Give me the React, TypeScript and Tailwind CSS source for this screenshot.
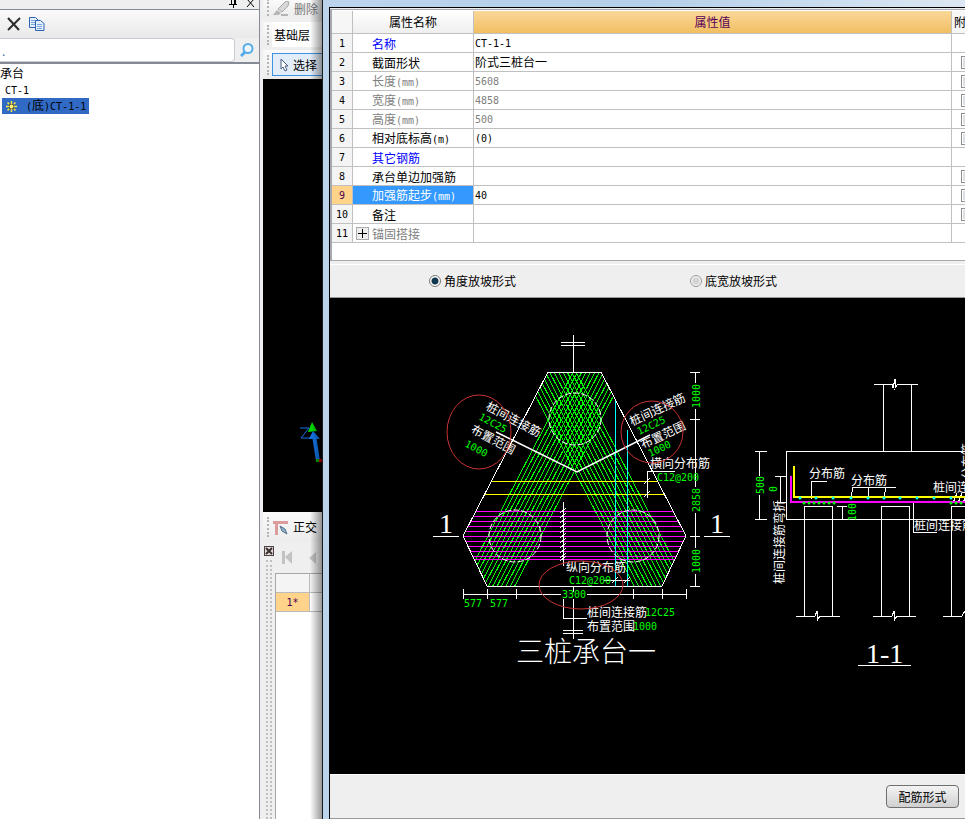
import type { ReactNode } from "react";

type Row = { name: string; value: string; tone?: "link" | "muted"; check?: boolean; selected?: boolean; expand?: boolean };

const rows: Row[] = [
  { name: "名称", value: "CT-1-1", tone: "link" },
  { name: "截面形状", value: "阶式三桩台一", check: true },
  { name: "长度(mm)", value: "5608", tone: "muted", check: true },
  { name: "宽度(mm)", value: "4858", tone: "muted", check: true },
  { name: "高度(mm)", value: "500", tone: "muted", check: true },
  { name: "相对底标高(m)", value: "(0)", check: true },
  { name: "其它钢筋", value: "", tone: "link" },
  { name: "承台单边加强筋", value: "", check: true },
  { name: "加强筋起步(mm)", value: "40", check: true, selected: true },
  { name: "备注", value: "", check: true },
  { name: "锚固搭接", value: "", tone: "muted", expand: true },
];

const HEX = "548,372 601,372 686,536 662,586 487,586 463,536";
const bars = Array.from({ length: 13 }, (_, i) => i);
const meshRows = [511, 516, 521, 526, 531, 536, 541, 546, 551, 556, 559];

// Latin runs are set in a narrower mono face than the Chinese around them
function Mixed({ text }: { text: string }) {
  const parts = text.match(/[\x20-\x7e]+|[^\x20-\x7e]+/g) || [];
  return (
    <>
      {parts.map((p, i) =>
        /^[\x20-\x7e]/.test(p) ? (
          <span key={i} className="font-['DejaVu_Sans_Mono',monospace] text-[10px]">{p}</span>
        ) : (
          <span key={i}>{p}</span>
        )
      )}
    </>
  );
}

function Grip() {
  return <span className="h-5 w-0 shrink-0 border-l-2 border-dotted border-[#b4b4b4]" />;
}

function ToolRow({ children }: { children: ReactNode }) {
  return (
    <div className="flex shrink-0 items-center gap-[3px] overflow-hidden bg-gradient-to-b from-[#fafafa] to-[#ececec] pl-1 text-[12px] whitespace-nowrap">
      {children}
    </div>
  );
}

function TreePanel() {
  return (
    <aside className="flex w-[260px] shrink-0 flex-col border-r border-[#858b95] bg-white">
      <div className="flex h-[10px] items-start justify-end gap-2 overflow-hidden border-b border-[#858b95] bg-[#efefef] pr-1">
        <svg width="10" height="8" viewBox="0 0 10 8" stroke="#000" fill="none" shapeRendering="crispEdges">
          <path d="M3 0v4M6 0v4M7 0v4M1 4h8M5 4v4" />
        </svg>
        <svg width="9" height="8" viewBox="0 0 9 8" stroke="#000" fill="none">
          <path d="M1 -1l7 8M8 -1l-7 8" />
        </svg>
      </div>
      <div className="flex h-[28px] items-center gap-2 bg-gradient-to-b from-[#fafafa] to-[#e9e9e9] pb-px pl-[7px]">
        <button type="button" aria-label="删除构件">
          <svg width="14" height="14" viewBox="0 0 14 14" stroke="#2c2c2c" fill="none">
            <path d="M1 1l11 12" strokeWidth="2" />
            <path d="M13 1L1 13" strokeWidth="2" />
          </svg>
        </button>
        <button type="button" aria-label="复制构件">
          <svg width="16" height="14" viewBox="0 0 16 14" stroke="#2d63b4" fill="#e4effc">
            <path d="M.5 .5h6l3 3v7h-9z" />
            <path d="M2 3.500h4M2 5.500h4M2 7.500h4" stroke="#7fa6dc" />
            <path d="M6.500 3.500h5l3.500 3v7h-8.500z" />
            <path d="M8 7.500h5M8 9.500h5M8 11.500h5" stroke="#7fa6dc" />
          </svg>
        </button>
      </div>
      <div className="flex h-[26px] items-center border-b-2 border-[#858b95] bg-[#efefef]">
        <input
          type="text"
          aria-label="搜索构件"
          placeholder="."
          className="h-6 min-w-0 flex-1 rounded-r-sm border border-l-0 border-[#c8ccd4] bg-white pl-[2px] text-[12px] placeholder:text-[#4a7ab0]"
        />
        <button type="button" aria-label="搜索" className="flex w-[24px] justify-center">
          <svg width="14" height="14" viewBox="0 0 14 14" fill="#eef7fd" stroke="#55ace9">
            <path d="M5 9L1 13" strokeWidth="3" />
            <circle cx="8" cy="5.500" r="4.500" strokeWidth="2" />
          </svg>
        </button>
      </div>
      <ul className="text-[12px] leading-4">
        <li>
          <button type="button" className="block h-4 pt-px">承台</button>
        </li>
        <li>
          <button type="button" className="block h-4 pt-px pl-[5px]"><Mixed text="CT-1" /></button>
        </li>
        <li>
          <button type="button" className="mt-[2px] ml-[2px] flex h-4 items-center gap-[9px] bg-[#316ac5] pr-[3px] pl-1">
            <svg width="11" height="11" viewBox="0 0 11 11" fill="none">
              <path d="M5.500 0v11M0 5.500h11M1.500 1.500l8 8M9.500 1.500l-8 8" stroke="#f7e948" strokeWidth="1.500" />
              <path d="M4 2.500v6M7 2.500v6M2.500 4h6M2.500 7h6" stroke="#1b1b1b" strokeWidth=".7" />
              <rect x="4" y="4" width="3" height="3" fill="#fff27a" />
            </svg>
            <span><Mixed text="(底)CT-1-1" /></span>
          </button>
        </li>
      </ul>
    </aside>
  );
}

function ToolColumn() {
  return (
    <section className="relative flex w-[59px] shrink-0 flex-col overflow-hidden bg-[#efefef]">
      <ToolRow>
        <div className="flex h-[17px] items-center gap-1">
          <Grip />
          <button type="button" disabled className="flex h-[15px] items-center gap-1 text-[#777]">
            <svg width="17" height="15" viewBox="0 0 17 15">
              <path d="M0 14l4-5 4 3c-1 2-4 2-8 2z" fill="#b4b4b4" />
              <path d="M5 8L13 0l3 1-1 4-6 6z" fill="#d8d8d8" stroke="#a8a8a8" />
              <path d="M8 14h7" stroke="#b4b4b4" strokeWidth="2" />
            </svg>
            删除
          </button>
        </div>
      </ToolRow>
      <div className="h-[5px]" />
      <ToolRow>
        <Grip />
        <select aria-label="楼层" className="h-[25px] w-[60px] shrink-0 appearance-none bg-white px-[2px]">
          <option>基础层</option>
        </select>
      </ToolRow>
      <div className="h-[3px]" />
      <ToolRow>
        <Grip />
        <button type="button" className="my-[3px] flex h-[23px] w-[52px] shrink-0 items-center gap-[3px] border border-[#3c93e6] bg-[#e3edf9] pl-[6px]">
          <svg width="11" height="14" viewBox="0 0 11 14" fill="#fff" stroke="#4a5d85">
            <path d="M2 1v10l2-2 2 4 2-1-2-4h3z" />
          </svg>
          选择
        </button>
      </ToolRow>
      <div className="flex h-[433px] items-end justify-end bg-black pb-12">
        <svg width="22" height="44" viewBox="300 421 22 44" fill="none">
          <path d="M300 429h9l-8 10h9" stroke="#1672e6" />
          <path d="M308 433l4-10 5 9z" fill="#00e000" />
          <path d="M318 462l-4-26" stroke="#1478f0" strokeWidth="4" />
          <path d="M309 440l4-8 7 8z" fill="#1478f0" />
          <path d="M316 460h4v3h-4z" fill="#00b400" />
          <path d="M319 460h3v3h-3z" fill="#d00000" />
        </svg>
      </div>
      <ToolRow>
        <Grip />
        <button type="button" className="flex h-[30px] items-center gap-1 pl-px">
          <svg width="16" height="16" viewBox="0 0 16 16">
            <path d="M0 2h15v3H5v11H2V5H0z" fill="#dc9c9c" />
            <path d="M7 7l5 3 2 5-5-3z" fill="#8fb2cf" stroke="#55708a" />
          </svg>
          正交
        </button>
      </ToolRow>
      <div className="flex flex-1">
        <div className="flex w-3 flex-col items-center gap-1 pt-1">
          <button type="button" aria-label="关闭" className="h-[10px] w-[10px] border border-[#444] bg-[#eed6d6]">
            <svg width="8" height="8" viewBox="0 0 8 8" stroke="#333">
              <path d="M1 1l6 6M7 1l-6 6" strokeWidth="2" />
            </svg>
          </button>
          <div className="flex flex-1 gap-[2px]">
            <span className="border-l-2 border-dotted border-[#c0c0c0]" />
            <span className="border-l-2 border-dotted border-[#c0c0c0]" />
          </div>
        </div>
        <div className="flex flex-1 flex-col">
          <div className="flex h-[31px] items-center gap-4 pl-[7px]">
            <button type="button" aria-label="首条" disabled>
              <svg width="11" height="13" viewBox="0 0 11 13" fill="#c2c2c2"><path d="M0 0h3v13H0zM10 0v13L3 6z" /></svg>
            </button>
            <button type="button" aria-label="上一条" disabled>
              <svg width="7" height="12" viewBox="0 0 7 12" fill="#c2c2c2"><path d="M7 0v12L0 6z" /></svg>
            </button>
          </div>
          <div className="flex-1 border-t border-l border-[#a6a8ae] bg-white">
            <table className="w-full table-fixed border-separate border-spacing-0 text-[12px]">
              <thead>
                <tr>
                  <th className="h-[19px] w-[34px] border-r border-b border-[#bbb] bg-[#f4f4f4]" />
                  <th className="border-b border-[#bbb] bg-[#f4f4f4]" />
                </tr>
              </thead>
              <tbody>
                <tr>
                  <td className="h-[19px] border-r border-b border-[#bbb] bg-[#ffd38a] p-0 text-center leading-4 text-[#4b0055]"><Mixed text="1*" /></td>
                  <td className="border-b border-[#bbb]" />
                </tr>
              </tbody>
            </table>
          </div>
        </div>
      </div>
      {/* shadow cast by the dialog */}
      <div className="pointer-events-none absolute inset-y-0 right-0 w-3 bg-gradient-to-r from-transparent to-black/40" />
    </section>
  );
}

function PropertyTable() {
  return (
    <div className="border-t border-b border-l-2 border-[#a8a8b0] bg-white pt-px pb-[17px]">
      <table className="w-full table-fixed border-separate border-spacing-0 text-[12px] leading-4">
        <thead>
          <tr className="h-[23px]">
            <th className="h-[23px] w-[21px] border-r border-b border-[#c0c0c0] bg-[#f6f6f6]" />
            <th className="w-[121px] border-r border-b border-[#c0c0c0] bg-gradient-to-b from-white to-[#efefef] p-0 font-normal">属性名称</th>
            <th className="border-r border-b border-[#c0c0c0] bg-gradient-to-b from-[#fad798] to-[#f1bf62] p-0 font-normal text-[#5a0058]">属性值</th>
            <th className="w-[13px] overflow-hidden border-b border-[#c0c0c0] bg-[#f6f6f6] p-0 pl-[2px] text-left font-normal whitespace-nowrap">附加</th>
          </tr>
        </thead>
        <tbody>
          {rows.map((r, i) => (
            <tr key={r.name}>
              <td className={`h-[19px] border-r border-b border-[#c0c0c0] p-0 text-center ${r.selected ? "bg-[#ffd38a] text-[#4b0055]" : "bg-[#f4f4f4]"}`}>
                <Mixed text={String(i + 1)} />
              </td>
              <td className={`border-r border-b border-[#c0c0c0] p-0 ${r.selected ? "bg-[#3399ff] text-white" : r.tone === "link" ? "text-[#0000ff]" : r.tone === "muted" ? "text-[#808080]" : ""}`}>
                <div className="flex h-[18px] items-center pt-px">
                  <span className="flex w-[19px] shrink-0 justify-center">
                    {r.expand && (
                      <button type="button" aria-label="展开" className="h-[13px] w-[13px] border border-[#aaa] bg-[#eee]">
                        <svg width="11" height="11" viewBox="0 0 11 11" stroke="#000" shapeRendering="crispEdges"><path d="M1 5.500h9M5.500 1v9" /></svg>
                      </button>
                    )}
                  </span>
                  <span><Mixed text={r.name} /></span>
                </div>
              </td>
              <td className={`border-r border-b border-[#c0c0c0] p-0 pl-px ${r.tone === "muted" ? "text-[#808080]" : ""}`}><Mixed text={r.value} /></td>
              <td className="overflow-hidden border-b border-[#c0c0c0] p-0">
                {r.check && (
                  <input type="checkbox" aria-label={`附加 ${r.name}`} className="ml-[9px] block h-[13px] w-[13px] appearance-none border border-[#8e8f8f] bg-[#dcdfe3] outline outline-1 -outline-offset-2 outline-white" />
                )}
              </td>
            </tr>
          ))}
        </tbody>
      </table>
    </div>
  );
}

function Cjk({ x, y, children, rotate = 0, fill = "#fff" }: { x: number; y: number; children: ReactNode; rotate?: number; fill?: string }) {
  return (
    <text x={x} y={y} fill={fill} transform={`rotate(${rotate} ${x} ${y})`} className="font-['Noto_Sans_CJK_SC',sans-serif] text-[12px]">
      {children}
    </text>
  );
}

function Num({ x, y, children, rotate = 0 }: { x: number; y: number; children: ReactNode; rotate?: number }) {
  return (
    <text x={x} y={y} fill="#00ff00" transform={`rotate(${rotate} ${x} ${y})`} className="font-['DejaVu_Sans_Mono',monospace] text-[10px]">
      {children}
    </text>
  );
}

function PlanView() {
  return (
    <g fill="none" stroke="#fff">
      <clipPath id="cap"><polygon points={HEX} /></clipPath>
      <g clipPath="url(#cap)">
        <g stroke="#00ff00" shapeRendering="crispEdges">
          {bars.map((i) => (
            <path key={i} d={`M${573 + i * 4.4} 372l-111 214M${576 - i * 4.4} 372l111 214`} />
          ))}
        </g>
        <path d="M463 481.500h223M463 494.500h223" stroke="#ffff00" />
        <path d={meshRows.map((y) => `M463 ${y + 0.5}h223`).join("")} stroke="#ff00ff" />
        <path d="M615.500 400v186M627.500 430v156" stroke="#00ffff" />
      </g>
      <g shapeRendering="crispEdges">
        <polygon points={HEX} />
        <path d="M573 335v37M561 342h24M561 345h24" />
        <path d="M563 502v64M563 599v19h24M573 587v5M573 599v40M563 630h20M563 633h20" />
        {meshRows.map((y) => (
          <path key={y} d={`M560 ${y + 2}l6 -5`} />
        ))}
        <path d="M463 594h98M587 594h99M463 589v10M487 589v10M516 589v10M633 589v10M662 589v10M686 589v10" />
        <path d="M695 372v11M695 409v78M695 513v35M695 574v12M690 372h10M690 419h10M690 536h10M690 586h10" />
        <path d="M675 471h-28v27M644 484l6 -6M644 497l6 -6M604 580h26M612 583l6 -6M624 583l6 -6" />
        <path d="M433 536h26M704 536h26" />
      </g>
      <path d="M496 432L577 472L650 435" strokeWidth="1.500" />
      <g strokeDasharray="6 2">
        <circle cx="575" cy="419" r="26" />
        <circle cx="515" cy="536" r="26" />
        <circle cx="633" cy="536" r="26" />
      </g>
      <g stroke="none">
        <Cjk x={485} y={409} rotate={28}>桩间连接筋</Cjk>
        <Num x={478} y={419} rotate={28}>12C25</Num>
        <Cjk x={470} y={432} rotate={28}>布置范围</Cjk>
        <Num x={464} y={446} rotate={28}>1000</Num>
        <Cjk x={632} y={426} rotate={-25}>桩间连接筋</Cjk>
        <Num x={639} y={435} rotate={-25}>12C25</Num>
        <Cjk x={643} y={449} rotate={-25}>布置范围</Cjk>
        <Num x={650} y={457} rotate={-25}>1000</Num>
        <Cjk x={650} y={468}>横向分布筋</Cjk>
        <Num x={657} y={481}>C12@200</Num>
        <Cjk x={566} y={572}>纵向分布筋</Cjk>
        <Num x={569} y={584}>C12@200</Num>
        <Num x={562} y={598}>3300</Num>
        <Num x={464} y={607}>577</Num>
        <Num x={490} y={607}>577</Num>
        <Cjk x={587} y={617}>桩间连接筋</Cjk>
        <Num x={645} y={616}>12C25</Num>
        <Cjk x={587} y={631}>布置范围</Cjk>
        <Num x={633} y={630}>1000</Num>
        <Num x={700} y={408} rotate={-90}>1000</Num>
        <Num x={700} y={512} rotate={-90}>2858</Num>
        <Num x={700} y={573} rotate={-90}>1000</Num>
        <g fill="#fff" className="text-[28px]">
          <text x="439" y="533" className="font-['Liberation_Serif',serif]">1</text>
          <text x="710" y="533" className="font-['Liberation_Serif',serif]">1</text>
          <text x="516" y="662" className="font-['Noto_Sans_CJK_SC',sans-serif] font-light">三桩承台一</text>
        </g>
      </g>
      <g stroke="#c83232">
        <ellipse cx="479" cy="432" rx="32" ry="37" />
        <circle cx="652" cy="432" r="31" />
        <ellipse cx="581" cy="585" rx="42" ry="24" />
      </g>
    </g>
  );
}

function SectionView() {
  return (
    <g fill="none" stroke="#fff">
      <g shapeRendering="crispEdges">
        <path d="M970 451H786V519H970" />
        <path d="M883 451V384M911 451V384M874 384h18l1 4l2 -9v9l3 -4h20" />
        <path d="M759 451v25M759 495v24M755 451h12M755 519h12M780 476v26M775 476h11M775 502h11" />
        <path d="M804 616V506h28v110M881 616V506h28v110M951 616V506h19" />
        <path d="M796 616h19l2 -5v10l3 -5h20M873 616h19l2 -5v10l3 -5h19M943 616h19l3 -5" />
        <path d="M842 506v14M837 506h10M913 501v31h24" />
        <path d="M827 481h-16v18M896 487h-43l-2 11M869 487l-1 11M886 487l-2 11M957 493l-4 10M962 493l-4 10M967 493l-4 10" />
        <path d="M858 665h53" />
        <path d="M794 466v31h176" stroke="#ffff00" strokeWidth="2" />
        <path d="M791 476v26h180" stroke="#ff00ff" strokeWidth="2" />
      </g>
      <g stroke="none">
        {[800, 816, 833, 851, 868, 884, 900, 917, 934, 951].map((x) => (
          <circle key={x} cx={x} cy="498" r="1.500" fill="#00ffff" />
        ))}
        {[804, 809, 814, 819, 824, 829, 834, 951, 956, 961].map((x) => (
          <circle key={x} cx={x} cy="503" r="1.500" fill="#00ff00" />
        ))}
        <Cjk x={809} y={478}>分布筋</Cjk>
        <Cjk x={851} y={485}>分布筋</Cjk>
        <Cjk x={933} y={492}>桩间连接筋</Cjk>
        <Cjk x={914} y={530}>桩间连接筋</Cjk>
        <Cjk x={784} y={584} rotate={-90}>桩间连接筋弯折</Cjk>
        <Cjk x={972} y={479} rotate={-90}>分布筋</Cjk>
        <Num x={764} y={494} rotate={-90}>500</Num>
        <Num x={777} y={492} rotate={-90}>0</Num>
        <Num x={856} y={521} rotate={-90}>100</Num>
        <text x="866" y="663" fill="#fff" className="font-['Liberation_Serif',serif] text-[28px]">1-1</text>
      </g>
    </g>
  );
}

function PropertyDialog() {
  return (
    <main className="flex min-w-0 flex-1 border-l border-[#1a1a1a] bg-[#bcd3ec]">
      <div className="flex min-w-0 flex-1 flex-col pl-[6px]">
        <div className="h-[7px] bg-gradient-to-r from-[#bcd3ec] via-[#b4cfe9] to-[#dbe7f2]" />
        <div className="flex flex-1 flex-col border-t border-l border-black bg-[#efefef] pt-px">
          <PropertyTable />
          <div className="mt-[3px] flex h-[33px] items-center gap-[174px] border-t border-white pl-[99px] text-[12px] whitespace-nowrap">
            <label className="flex items-center gap-[3px]">
              <input type="radio" name="slope" defaultChecked className="h-3 w-3 appearance-none rounded-full border border-[#777] bg-white checked:bg-[radial-gradient(circle,#12384f_0_3px,#fff_4px)]" />
              角度放坡形式
            </label>
            <label className="flex items-center gap-[3px]">
              <input type="radio" name="slope" className="h-3 w-3 appearance-none rounded-full border border-[#999] bg-[radial-gradient(circle,#d4d4d4_0_3px,#fff_5px)]" />
              底宽放坡形式
            </label>
          </div>
          <div className="flex-1 overflow-hidden border-t border-[#999] bg-black">
            <svg width="635" height="476" viewBox="330 298 635 476" className="block">
              <PlanView />
              <SectionView />
            </svg>
          </div>
          <div className="flex h-[45px] items-center justify-end border-t border-b border-t-white border-b-[#999] pr-[6px]">
            <button type="button" className="h-[23px] w-[73px] rounded-sm border border-[#707070] bg-gradient-to-b from-[#f4f4f4] to-[#d0d0d0] text-[12px] leading-4">
              配筋形式
            </button>
          </div>
        </div>
      </div>
    </main>
  );
}

export default function App() {
  return (
    <div className="flex min-h-screen overflow-hidden bg-[#efefef] font-['Noto_Sans_CJK_SC',sans-serif] text-black">
      <TreePanel />
      <div className="w-[3px] shrink-0 bg-[#efefef]" />
      <ToolColumn />
      <PropertyDialog />
    </div>
  );
}
